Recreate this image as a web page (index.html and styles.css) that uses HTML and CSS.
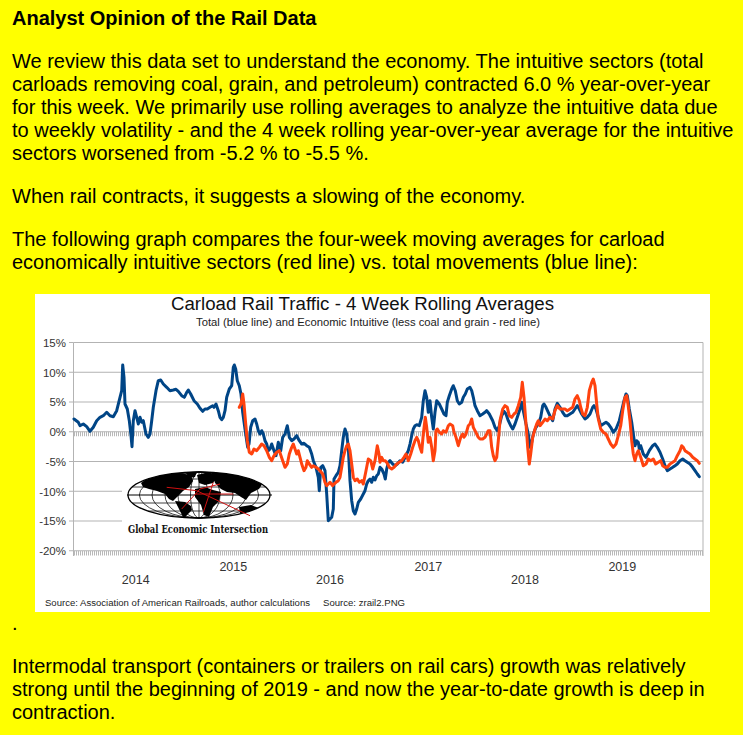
FILE: index.html
```
<!DOCTYPE html>
<html lang="en">
<head>
<meta charset="utf-8">
<title>Analyst Opinion of the Rail Data</title>
<link rel="stylesheet" href="styles.css">
</head>
<body>
<main class="article">
  <h2 class="title">Analyst Opinion of the Rail Data</h2>
  <p class="para">We review this data set to understand the economy. The intuitive sectors (total carloads removing coal, grain, and petroleum) contracted 6.0 % year-over-year for this week. We primarily use rolling averages to analyze the intuitive data due to weekly volatility - and the 4 week rolling year-over-year average for the intuitive sectors worsened from -5.2 % to -5.5 %.</p>
  <p class="para">When rail contracts, it suggests a slowing of the economy.</p>
  <p class="para">The following graph compares the four-week moving averages for carload economically intuitive sectors (red line) vs. total movements (blue line):</p>
  <figure class="chart">
    <svg class="chart-svg" width="675" height="318" viewBox="35 295 675 318" xmlns="http://www.w3.org/2000/svg">
      <defs>
        <clipPath id="globeClip"><ellipse cx="0" cy="0" rx="71" ry="23"/></clipPath>
      </defs>
      <rect x="35" y="295" width="675" height="318" fill="#fff"/>
      <text class="c-title" x="362.5" y="311" text-anchor="middle" textLength="383" lengthAdjust="spacingAndGlyphs">Carload Rail Traffic - 4 Week Rolling Averages</text>
      <text class="c-sub" x="368" y="326.5" text-anchor="middle" textLength="344" lengthAdjust="spacingAndGlyphs">Total (blue line) and Economic Intuitive (less coal and grain - red line)</text>

      <g class="grid">
        <line x1="73.5" x2="703" y1="343.5" y2="343.5"/>
        <line x1="73.5" x2="703" y1="373.25" y2="373.25"/>
        <line x1="73.5" x2="703" y1="403" y2="403"/>
        <line x1="73.5" x2="703" y1="432.75" y2="432.75"/>
        <line x1="73.5" x2="703" y1="462.5" y2="462.5"/>
        <line x1="73.5" x2="703" y1="492.25" y2="492.25"/>
        <line x1="73.5" x2="703" y1="522" y2="522"/>
        <line x1="73.5" x2="703" y1="551.75" y2="551.75"/>
        <line x1="73.5" x2="73.5" y1="343.5" y2="557"/>
        <line x1="703" x2="703" y1="343.5" y2="557"/>
        <line x1="69" x2="73.5" y1="343.5" y2="343.5"/>
        <line x1="69" x2="73.5" y1="373.25" y2="373.25"/>
        <line x1="69" x2="73.5" y1="403" y2="403"/>
        <line x1="69" x2="73.5" y1="432.75" y2="432.75"/>
        <line x1="69" x2="73.5" y1="462.5" y2="462.5"/>
        <line x1="69" x2="73.5" y1="492.25" y2="492.25"/>
        <line x1="69" x2="73.5" y1="522" y2="522"/>
        <line x1="69" x2="73.5" y1="551.75" y2="551.75"/>
      </g>
      <g class="hatch">
        <line x1="74" x2="703" y1="435" y2="435"/>
        <line x1="74" x2="703" y1="554.2" y2="554.2"/>
      </g>

      <g class="ylab">
        <text x="66" y="347.8">15%</text>
        <text x="66" y="377.5">10%</text>
        <text x="66" y="407.3">5%</text>
        <text x="66" y="437">0%</text>
        <text x="66" y="466.8">-5%</text>
        <text x="66" y="496.5">-10%</text>
        <text x="66" y="526.3">-15%</text>
        <text x="66" y="556">-20%</text>
      </g>
      <g class="xlab">
        <text x="135.7" y="585">2014</text>
        <text x="233.3" y="571.7">2015</text>
        <text x="330" y="585">2016</text>
        <text x="428.3" y="571.7">2017</text>
        <text x="525" y="585">2018</text>
        <text x="622.3" y="571.7">2019</text>
      </g>
      <text class="c-src" x="45" y="606.5" textLength="265" lengthAdjust="spacingAndGlyphs">Source: Association of American Railroads, author calculations</text>
      <text class="c-src" x="323" y="606.5" textLength="82" lengthAdjust="spacingAndGlyphs">Source: zrail2.PNG</text>

      <g class="logo">
        <rect x="122" y="470" width="148" height="70" fill="#fff"/>
        <g transform="translate(199 496)">
          <g class="globe-lines">
            <ellipse cx="0" cy="0" rx="8.5" ry="23"/>
            <ellipse cx="0" cy="0" rx="21" ry="23"/>
            <ellipse cx="0" cy="0" rx="34" ry="23"/>
            <ellipse cx="0" cy="0" rx="47" ry="23"/>
            <ellipse cx="0" cy="0" rx="59.6" ry="23"/>
            <line x1="0" x2="0" y1="-23" y2="23"/>
            <line x1="-66.6" x2="66.6" y1="-8" y2="-8"/>
            <line x1="-66.6" x2="66.6" y1="8" y2="8"/>
            <line x1="-51" x2="51" y1="-16" y2="-16"/>
            <line x1="-51" x2="51" y1="16" y2="16"/>
          </g>
          <g clip-path="url(#globeClip)" class="land">
            <path d="M-58,-12 L-50,-18 L-35,-21 L-20,-22 L-8,-20 L-6,-14 L-10,-8 L-16,-4 L-22,2 L-26,6 L-30,4 L-34,-1 L-42,-4 L-50,-6 L-56,-8 Z"/>
            <path d="M-14,-24 L-2,-24 L-4,-18 L-10,-17 Z"/>
            <path d="M-24,6 L-14,7 L-8,11 L-7,15 L-12,20 L-15,24 L-18,18 L-21,12 Z"/>
            <path d="M-2,-20 L10,-23 L18,-18 L14,-12 L6,-10 L0,-12 Z"/>
            <path d="M-4,-6 L6,-8 L14,-5 L22,-3 L20,6 L14,12 L10,22 L5,20 L2,10 L-4,2 Z"/>
            <path d="M12,-23 L40,-24 L58,-18 L64,-12 L60,-6 L52,-2 L47,5 L42,2 L36,-2 L28,-3 L22,-6 L16,-12 Z"/>
            <path d="M40,12 L52,10 L60,13 L58,20 L48,22 L41,18 Z"/>
          </g>
          <ellipse class="globe-rim" cx="0" cy="0" rx="71" ry="23"/>
          <line class="globe-eq" x1="-72" x2="73" y1="0" y2="0"/>
        </g>
        <g class="routes">
          <polyline points="166.7,488.3 196.7,491.7 250,516.7"/>
          <polyline points="181.7,510 200,490 220,485"/>
          <polyline points="195,495 233.3,495"/>
          <polyline points="213.3,483.3 203.3,513.3"/>
        </g>
        <text class="logo-text" x="128" y="533.5" textLength="140" lengthAdjust="spacingAndGlyphs">Global Economic Intersection</text>
      </g>

      <polyline class="s-blue" points="74,420 78.3,423.3 80,426.7 83.3,425 86.7,427.7 90,432.3 93.3,428.3 96.7,421.7 100,418.3 103.3,416.7 106.7,413.3 110,416.7 113.3,417.7 116.7,411.7 120,398.3 121.7,391.7 122.7,366 124,378.3 125,405 127.3,410 129.3,421.7 131,436.7 132,447.7 133.3,421.7 135,411.7 136.7,418.3 138.3,425 140,418.3 141.7,423.3 143.3,421.7 146,435 148.3,438.3 150,435 151.7,421.7 153.3,408.3 156,391.7 158.3,381.7 160.7,381 163.3,385 166.7,388.3 170,391.7 173.3,391 176,390.3 178.3,392.3 181.7,396.7 184.3,398.3 186.7,393.3 188.3,391 190.7,395 194,401.7 197.3,405 200,409.3 202.7,412.3 205,410 207.3,410 210,408.3 212.7,406.7 214,408.3 216,405 218.3,411.7 220,418.3 221.7,420.7 223.3,418.3 225,411.7 226.7,398.3 229.3,390 231.7,386.7 233.3,368.3 234.3,366 235.7,370 237.3,381.7 239.3,386.7 241,395 242.7,413.3 245,430 246.7,441.7 247.7,448.3 249,445 250.7,428.3 252.7,421.7 255,420 256.7,425 258.3,431.7 260,435 261.7,431.7 263.3,435 265,441.7 266.7,445 268.3,451.7 270,450 271.7,445 274,451.7 276,456.7 278.3,443.3 280.7,451.7 282.7,438.3 285,435 287.3,426.7 289.3,438.3 291.7,441.7 294,440 296.7,436.7 299.3,441.7 301.7,445 304,444.3 306.7,446.7 309.3,448.3 311.7,455 313.3,461.7 316,468.3 318.3,478.3 319.3,491.7 320.7,468.3 322.7,466.7 325,471.7 326.7,495 328.3,521.7 330,520 331.7,518.3 333.3,510 334,480 336,476.7 338.3,473.3 340,466.7 341.7,451.7 343.3,438.3 345,430 346.7,435 348.3,448.3 350,481.7 351.7,501.7 353.3,511.7 355,515 356.7,510 358.3,503.3 360.7,500 363.3,495 365,491.7 366.7,485 368.3,481.7 370,480 371.7,483.3 373.3,478.3 375,481 376.7,476.7 378.3,475 380,468.3 381.7,470 384,475 385.3,480 386.7,470 388.3,463.3 390,461.7 392.7,465 395,466.7 397.3,465 400,461.7 402.7,463.3 405,458.3 406.7,455 408.3,451.7 410,445 411.7,436.7 413.3,430 415,426.7 416.7,425.7 419.3,426.7 421.7,418.3 423.3,401.7 425,391.7 426.7,398.3 428.3,413.3 430,401.7 431.7,418.3 433.3,430 435,413.3 436.7,401.7 439.3,405 441.7,410 444,415 446,416.7 447.3,403.3 449.3,396.7 451.7,390 453.3,386.7 455.3,391.7 457.3,401.7 459.3,405 461.7,403.3 463.3,398.3 465.3,395 467.3,390 470,388.3 471.7,391.7 473.3,398.3 475,406.7 477.3,411.7 480,416.7 482.7,415 485,413.3 486.7,411.7 489.3,415 492.7,421.7 495,428.3 497.3,431.7 499.3,426.7 501.7,416.7 504,412.3 506,415 508.3,421.7 510.7,426.7 512.7,430 515,425 517.3,418.3 520,410 521.7,403.3 523.3,411.7 526,425 528.3,435 530,448.3 531.7,443.3 533.3,435 536,428.3 538.3,425 540.7,418.3 542.7,406.7 544,405 546,408.3 548.3,413.3 550.7,418.3 552.7,421.7 555,410 557.3,404.3 560,408.3 562.7,413.3 565,416.7 567.3,416.7 570,415 572.7,413.3 575,410 577.3,406.7 579.3,410 581.7,415 585,420 587.3,418.3 590,415 592.7,408.3 594,406.7 596,410 598.3,418.3 600.7,426.7 603.3,425 606,423.3 608.3,425 610.7,428.3 613.3,433.3 616,430 619.3,421.7 621.7,411.7 624,401.7 626,395 627.3,396.7 629.3,410 631.7,423.3 633.3,435 635,446.7 636.7,441.7 638.3,443.3 639.3,450 640.7,446.7 643.3,455 646,458.3 649.3,451.7 652.7,446.7 655,445 657.3,448.3 660,453.3 662.7,460 665,466.7 667.3,471.7 670,470 672.7,468.3 675,466.7 677.3,465 680,461.7 682.7,460 685,461.7 687.3,463.3 690,465 692.7,468.3 695,471.7 697.3,475 699.3,477.7"/>
      <polyline class="s-red" points="239.3,408.3 241,405 242.7,395 244,405 245.7,425 247.3,441.7 249.3,453.3 251.7,455 254,450 256.7,451.7 259.3,448.3 261.7,445 264,446.7 266.7,451.7 269.3,458.3 271.7,461.7 274,456.7 276.7,453.3 279.3,451.7 282.7,461.7 285,468.3 287.3,465 289.3,455 291.7,448.3 293.3,445 295,450 296.7,455 298.3,451.7 300,458.3 301.7,465 304,471.7 306,468.3 307.3,461.7 309.3,465 311.7,468.3 313.3,466.7 316,468.3 318.3,470 320,471.7 322.7,475 325,483.3 326.7,486.7 328.3,485 330,483.3 332.7,486.7 334,485 336,483.3 338.3,481.7 340,478.3 341.7,468.3 343.3,458.3 345,451.7 346.7,446.7 348.3,445 350,451.7 351.7,465 353.3,478.3 355,481.7 357.3,480 359.3,483.3 361.7,481.7 363.3,485 366,471.7 368.3,460 370.7,461.7 372.7,470 375,461.7 377.3,446.7 379,455 380,463.3 381.7,458.3 383.3,461.7 385,461.7 386.7,463.3 389.3,468.3 391.7,470 394,468.3 396.7,465 399.3,463.3 401.7,461.7 404,458.3 406,455 408.3,461.7 410.7,455 412.7,448.3 415,441.7 416.7,438.3 418.3,441.7 420,448.3 421.7,453.3 423.3,435 425.3,418.3 426.7,428.3 428.3,443.3 430,438.3 431.7,448.3 433.3,461.7 435,451.7 436,431.7 437.3,430 439.3,433.3 441.7,435 443.3,431.7 446,433.3 448.3,426.7 450,425 452.7,426.7 454,433.3 456,438.3 458.3,446.7 460.7,438.3 462.7,435 464,438.3 466,435 468.3,426.7 470,425 471.7,420 473.3,428.3 475,431.7 476.7,435 478.3,438.3 480,440 482.7,440 485,438.3 486.7,435 488.3,431.7 490,431.7 491.7,448.3 493.3,456.7 495,461.7 496.7,458.3 498.3,441.7 500,421.7 502.7,410 505,406.7 507.3,408.3 509.3,416.7 511.7,418.3 514,415 516,413.3 518.3,406.7 520.7,398.3 522.3,383.3 524,398.3 526,425 527.7,448.3 529.3,465 530.7,455 532.7,438.3 535,430 536.7,425 538.3,421.7 540,426.7 542.7,423.3 545,420 547.3,421.7 550,418.3 552.7,420 555,411.7 557.3,406.7 560,410 562.7,410 565,410 567.3,411.7 570,410 572.7,408.3 575,400 577.3,396.7 579.3,401.7 580.7,408.3 582.7,415 585,416.7 587.3,408.3 589.3,391.7 591.7,383.3 593.3,380 595,386.7 596.7,405 598.3,420 600.7,430 603.3,433.3 606,435 608.3,440 610.7,445 613.3,448.3 616,445 618.3,436.7 620.7,426.7 622.7,411.7 625,398.3 626.7,396.7 628,405 630,421.7 631.7,441.7 633.3,455 635,461.7 636.7,455 638.3,451.7 640.7,458.3 643.3,466.7 646,465 648.3,460 650.7,461.7 653.3,460 655.7,465 658.3,463.3 660.7,461.7 662.7,466.7 665,468.3 667.3,468.3 670,465 672.7,463.3 675,461.7 677.3,456.7 680,451.7 681.7,446.7 683.3,448.3 685,451.7 687.3,453.3 690,455 692.7,458.3 695,460 697.3,461.7 699.3,464.3"/>
    </svg>
  </figure>
  <p class="dot">.</p>
  <p class="para">Intermodal transport (containers or trailers on rail cars) growth was relatively strong until the beginning of 2019 - and now the year-to-date growth is deep in contraction.</p>
</main>
</body>
</html>
```

FILE: styles.css
```
html, body {
  margin: 0;
  padding: 0;
}

body {
  background: #ffff00;
  color: #000;
  font-family: "Liberation Sans", Arial, sans-serif;
  font-size: 20px;
  line-height: 23px;
}

.article {
  padding: 7px 8px 0 12px;
}

.title {
  margin: 0;
  font-size: 20px;
  font-weight: bold;
  line-height: 23px;
}

.para {
  margin: 20px 0 0;
}

.chart {
  margin: 20px 0 0 23px;
  width: 675px;
  height: 318px;
  background: #fff;
}

.chart-svg {
  display: block;
  font-family: "Liberation Sans", Arial, sans-serif;
}

.dot {
  margin: 0;
}

.c-title {
  font-size: 18px;
  fill: #111;
}

.c-sub {
  font-size: 10px;
  fill: #222;
}

.c-src {
  font-size: 8.5px;
  fill: #222;
}

.grid line {
  stroke: #b3b3b3;
  stroke-width: 1;
}

.hatch line {
  stroke: #b8b8b8;
  stroke-width: 4.5;
  stroke-dasharray: 1 1;
}

.ylab text {
  font-size: 11.5px;
  text-anchor: end;
  fill: #333;
}

.xlab text {
  font-size: 12.5px;
  text-anchor: middle;
  fill: #333;
}

.globe-lines ellipse,
.globe-lines line {
  fill: none;
  stroke: #111;
  stroke-width: 0.8;
}

.land path {
  fill: #000;
}

.globe-rim {
  fill: none;
  stroke: #000;
  stroke-width: 1.3;
}

.globe-eq {
  stroke: #000;
  stroke-width: 1;
}

.routes polyline {
  fill: none;
  stroke: #d01010;
  stroke-width: 1;
}

.logo-text {
  font-family: "DejaVu Serif", "Liberation Serif", serif;
  font-weight: bold;
  font-size: 10.5px;
  fill: #111;
}

.s-blue,
.s-red {
  fill: none;
  stroke-width: 3;
  stroke-linejoin: round;
  stroke-linecap: round;
}

.s-blue {
  stroke: #004586;
}

.s-red {
  stroke: #ff420e;
}
```
